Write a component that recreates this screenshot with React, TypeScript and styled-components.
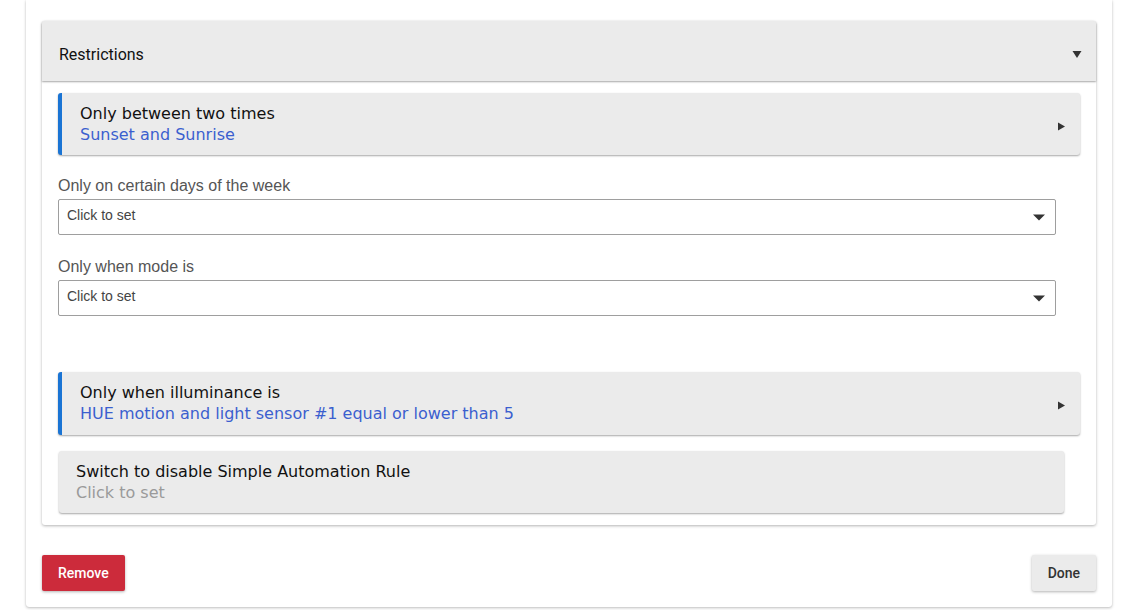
import React from "react";
import styled, { createGlobalStyle } from "styled-components";

const GlobalStyle = createGlobalStyle`
  html, body {
    margin: 0;
    padding: 0;
    background: #ffffff;
    overflow: hidden;
  }
  * { box-sizing: border-box; }
`;

const Page = styled.div`
  width: 1133px;
  height: 610px;
  overflow: hidden;
`;

const Dialog = styled.div`
  margin-left: 26px;
  width: 1086px;
  padding: 21px 16px 16px;
  background: #ffffff;
  box-shadow: 0 1px 3px rgba(0, 0, 0, 0.25), 0 0 1px rgba(0, 0, 0, 0.15);
  border-radius: 0 0 3px 3px;
`;

const Panel = styled.div`
  background: #ffffff;
  border-radius: 3px;
  box-shadow: 0 1px 3px rgba(0, 0, 0, 0.3);
`;

const PanelHeader = styled.div`
  height: 60px;
  display: flex;
  align-items: center;
  justify-content: space-between;
  padding: 6px 14px 0 17px;
  background: #ebebeb;
  border-radius: 3px 3px 0 0;
  box-shadow: 0 1px 2px rgba(0, 0, 0, 0.35);
  font-family: Roboto, "Liberation Sans", sans-serif;
  font-size: 16px;
  color: #111;
  position: relative;
`;

const PanelBody = styled.div`
  padding: 12px 16px 12px;
  display: flex;
  flex-direction: column;
`;

const Item = styled.div<{ $accent?: boolean; $inset?: number; $mt?: number; $tall?: boolean }>`
  display: flex;
  align-items: center;
  justify-content: space-between;
  margin: ${(p) => p.$mt ?? 0}px ${(p) => p.$inset ?? 0}px 0 ${(p) => (p.$inset ? 1 : 0)}px;
  padding: 10px 14px ${(p) => (p.$tall ? 11 : 10)}px ${(p) => (p.$accent ? 18 : 17)}px;
  background: #ebebeb;
  border-left: ${(p) => (p.$accent ? "4px solid #1a74d4" : "none")};
  border-radius: 3px;
  box-shadow: 0 1px 2px rgba(0, 0, 0, 0.35);
  font-family: "DejaVu Sans", sans-serif;
  font-size: 16px;
  line-height: 21px;
`;

const ItemText = styled.div`
  display: flex;
  flex-direction: column;
`;

const ItemTitle = styled.span`
  color: #111;
`;

const ItemValue = styled.span<{ $muted?: boolean }>`
  color: ${(p) => (p.$muted ? "#9a9a9a" : "#3b5fcf")};
`;

const ArrowBox = styled.span`
  display: flex;
  padding-top: 5px;
`;

const Field = styled.div<{ $mt: number }>`
  margin: ${(p) => p.$mt}px 24px 0 0;
  display: flex;
  flex-direction: column;
  font-family: "Liberation Sans", Arial, sans-serif;
`;

const FieldLabel = styled.label`
  font-size: 16px;
  line-height: 18px;
  color: #555;
  margin-bottom: 4px;
`;

const Select = styled.div`
  height: 36px;
  display: flex;
  align-items: center;
  justify-content: space-between;
  padding: 0 10px 4px 8px;
  border: 1px solid #9e9e9e;
  border-radius: 2px;
  font-size: 14px;
  color: #444;
  background: #fff;
`;

const CaretBox = styled.span`
  display: flex;
  padding-top: 4px;
`;

const Footer = styled.div`
  margin-top: 30px;
  display: flex;
  justify-content: space-between;
`;

const Button = styled.button<{ $danger?: boolean }>`
  height: 36px;
  padding: 0 16px;
  border: none;
  border-radius: 2px;
  font-family: Roboto, "Liberation Sans", sans-serif;
  font-size: 14px;
  font-weight: 500;
  background: ${(p) => (p.$danger ? "#cc2b3b" : "#ebebeb")};
  color: ${(p) => (p.$danger ? "#fff" : "#333")};
  box-shadow: 0 1px 3px rgba(0, 0, 0, 0.3);
`;

const ArrowRight = () => (
  <ArrowBox>
    <svg width="9" height="9" viewBox="0 0 9 9">
      <path d="M1 0.5 L8 4.5 L1 8.5 Z" fill="#333" />
    </svg>
  </ArrowBox>
);

const ArrowDown = () => (
  <svg width="10" height="8" viewBox="0 0 10 8">
    <path d="M0.5 1 L9.5 1 L5 8 Z" fill="#333" />
  </svg>
);

const Caret = () => (
  <CaretBox>
    <svg width="12" height="7" viewBox="0 0 12 7">
      <path d="M0 0.5 L12 0.5 L6 6.5 Z" fill="#333" />
    </svg>
  </CaretBox>
);

export default function App() {
  return (
    <Page>
      <GlobalStyle />
      <Dialog>
        <Panel>
          <PanelHeader>
            <span>Restrictions</span>
            <ArrowDown />
          </PanelHeader>
          <PanelBody>
            <Item $accent>
              <ItemText>
                <ItemTitle>Only between two times</ItemTitle>
                <ItemValue>Sunset and Sunrise</ItemValue>
              </ItemText>
              <ArrowRight />
            </Item>
            <Field $mt={22}>
              <FieldLabel>Only on certain days of the week</FieldLabel>
              <Select>
                <span>Click to set</span>
                <Caret />
              </Select>
            </Field>
            <Field $mt={23}>
              <FieldLabel>Only when mode is</FieldLabel>
              <Select>
                <span>Click to set</span>
                <Caret />
              </Select>
            </Field>
            <Item $accent $mt={56} $tall>
              <ItemText>
                <ItemTitle>Only when illuminance is</ItemTitle>
                <ItemValue>HUE motion and light sensor #1 equal or lower than 5</ItemValue>
              </ItemText>
              <ArrowRight />
            </Item>
            <Item $inset={16} $mt={16}>
              <ItemText>
                <ItemTitle>Switch to disable Simple Automation Rule</ItemTitle>
                <ItemValue $muted>Click to set</ItemValue>
              </ItemText>
            </Item>
          </PanelBody>
        </Panel>
        <Footer>
          <Button $danger>Remove</Button>
          <Button>Done</Button>
        </Footer>
      </Dialog>
    </Page>
  );
}
